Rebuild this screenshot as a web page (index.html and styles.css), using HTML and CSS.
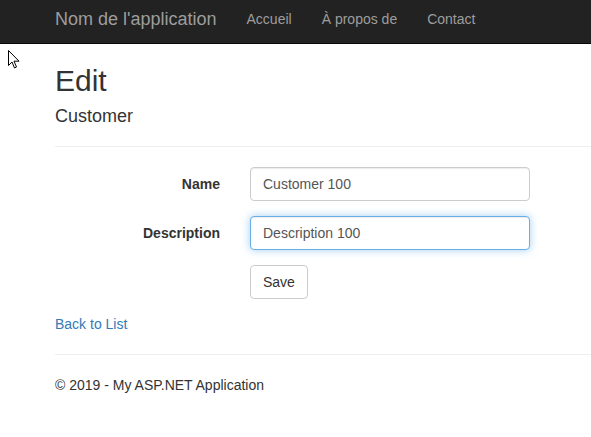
FILE: index.html
```html
<!DOCTYPE html>
<html lang="fr">
<head>
<meta charset="utf-8">
<title>Edit</title>
<link rel="stylesheet" href="styles.css">
</head>
<body>
<nav class="navbar">
  <a class="brand" href="#">Nom de l'application</a>
  <ul class="nav">
    <li><a href="#">Accueil</a></li>
    <li><a href="#">À propos de</a></li>
    <li><a href="#">Contact</a></li>
  </ul>
</nav>
<svg class="cursor" width="12" height="19" viewBox="0 0 12 19"><path d="M0.5 0.5 L0.5 15.5 L4 12 L6.5 18 L8.5 17 L6 11.2 L11 11.2 Z" fill="#fff" stroke="#000" stroke-width="1" stroke-linejoin="miter"/></svg>
<main class="container">
  <h2 class="title">Edit</h2>
  <h4 class="subtitle">Customer</h4>
  <hr class="rule">
  <form class="form">
    <div class="form-group">
      <label class="control-label" for="name">Name</label>
      <input class="form-control" id="name" type="text" value="Customer 100">
    </div>
    <div class="form-group">
      <label class="control-label" for="desc">Description</label>
      <input class="form-control focused" id="desc" type="text" value="Description 100">
    </div>
    <div class="form-group">
      <span></span>
      <div><button class="btn" type="button">Save</button></div>
    </div>
  </form>
  <div class="back"><a href="#">Back to List</a></div>
  <hr class="rule">
  <footer class="footer"><p>© 2019 - My ASP.NET Application</p></footer>
</main>
</body>
</html>
```
FILE: styles.css
```css
* { box-sizing: border-box; }
html, body { margin: 0; padding: 0; }
body {
  font-family: "Liberation Sans", Arial, Helvetica, sans-serif;
  font-size: 14px;
  line-height: 20px;
  color: #333;
  background: #fff;
  overflow: hidden;
}
.navbar {
  height: 44px;
  background: #222;
  border-bottom: 1px solid #080808;
  display: flex;
  align-items: center;
  padding-left: 40px;
  padding-bottom: 5px;
}
.brand {
  font-size: 18px;
  line-height: 20px;
  color: #9d9d9d;
  text-decoration: none;
  padding: 0 15px;
}
.nav {
  list-style: none;
  margin: 0;
  padding: 0;
  display: flex;
}
.nav a {
  display: block;
  padding: 0 15px;
  color: #9d9d9d;
  text-decoration: none;
  font-size: 14px;
  line-height: 20px;
}
.cursor {
  position: absolute;
  left: 8px;
  top: 50px;
}
.container {
  padding-left: 55px;
}
.title {
  font-size: 30px;
  font-weight: 500;
  line-height: 33px;
  margin: 20px 0 10px;
}
.subtitle {
  font-size: 18px;
  font-weight: 500;
  line-height: 19px;
  margin: 10px 0 10px;
}
.rule {
  border: 0;
  border-top: 1px solid #eee;
  margin: 20px 0;
  height: 0;
}
.form-group {
  display: grid;
  grid-template-columns: 165px 280px;
  column-gap: 30px;
  margin-bottom: 15px;
}
.control-label {
  text-align: right;
  font-weight: bold;
  padding-top: 7px;
}
.form-control {
  display: block;
  width: 280px;
  height: 34px;
  padding: 6px 12px;
  font-family: inherit;
  font-size: 14px;
  line-height: 20px;
  color: #555;
  background: #fff;
  border: 1px solid #ccc;
  border-radius: 4px;
  box-shadow: inset 0 1px 1px rgba(0,0,0,.075);
  outline: none;
}
.form-control.focused {
  border-color: #66afe9;
  box-shadow: inset 0 1px 1px rgba(0,0,0,.075), 0 0 8px rgba(102,175,233,.6);
}
.btn {
  display: inline-block;
  height: 34px;
  padding: 6px 12px;
  font-family: inherit;
  font-size: 14px;
  line-height: 20px;
  color: #333;
  background: #fff;
  border: 1px solid #ccc;
  border-radius: 4px;
}
.back a {
  color: #337ab7;
  text-decoration: none;
}
.footer p {
  margin: 0 0 10px;
}
```
